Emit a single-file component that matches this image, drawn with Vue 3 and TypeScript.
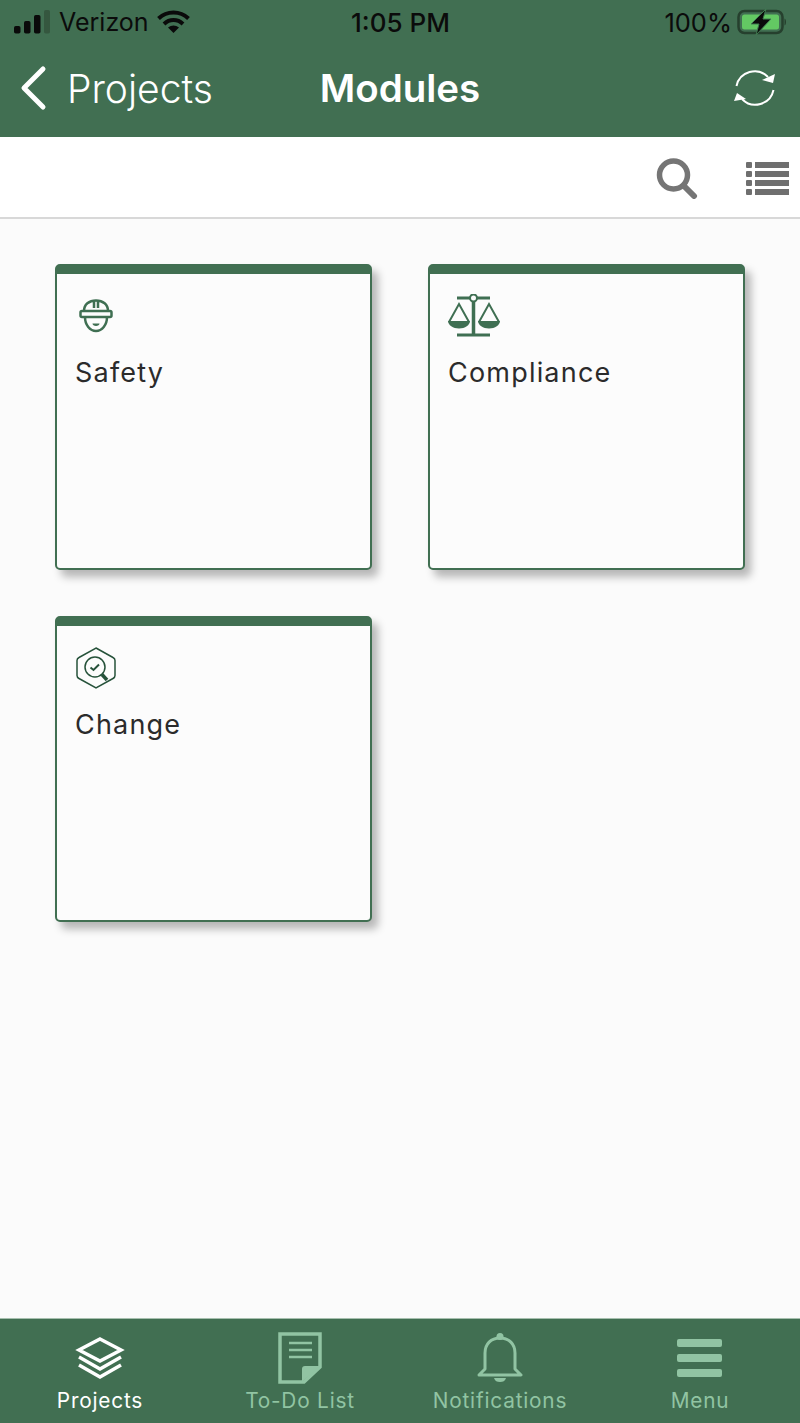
<script setup lang="ts">
const modules = [
  { name: 'Safety', icon: 'safety' },
  { name: 'Compliance', icon: 'scale' },
  { name: 'Change', icon: 'change' },
]
</script>

<template>
  <div class="page">
    <header class="top">
      <div class="status">
        <div class="status-left">
          <svg class="signal" width="36" height="24" viewBox="0 0 36 24">
            <rect x="0" y="16" width="6.500" height="7.500" rx="1.800" fill="#0a0a0a" />
            <rect x="10" y="11" width="6.500" height="12.500" rx="1.800" fill="#0a0a0a" />
            <rect x="20" y="5" width="6.500" height="18.500" rx="1.800" fill="#0a0a0a" />
            <rect x="30" y="0" width="6" height="23.500" rx="1.800" fill="#35573f" />
          </svg>
          <span class="carrier">Verizon</span>
          <svg class="wifi" width="33" height="24" viewBox="0 0 33 24">
            <path d="M1.500 8.500C10 .5 23 .5 31.500 8.500" fill="none" stroke="#0a0a0a" stroke-width="4" />
            <path d="M7 14C12.500 8.800 20.500 8.800 26 14" fill="none" stroke="#0a0a0a" stroke-width="4" />
            <path d="M11 17.500C14.500 14.800 18.500 14.800 22 17.500L16.500 23Z" fill="#0a0a0a" />
          </svg>
        </div>
        <span class="time">1:05 PM</span>
        <div class="status-right">
          <span class="pct">100%</span>
          <svg width="50" height="26" viewBox="0 0 50 26">
            <rect x="1.500" y="2" width="44" height="22" rx="6" fill="none" stroke="#26402e" stroke-width="2.500" />
            <rect x="5" y="5.500" width="37" height="15" rx="2.500" fill="#63c863" />
            <path d="M47.500 9.500c2 .5 2 6.500 0 7z" fill="#26402e" />
            <path d="M29 0L14 15h8l-3 11 15-16h-8z" fill="#0a0a0a" stroke="#3f7a50" stroke-width="1" />
          </svg>
        </div>
      </div>
      <nav class="nav">
        <div class="back">
          <svg width="30" height="46" viewBox="0 0 30 46">
            <path d="M25 4L6 23l19 19" fill="none" stroke="#fff" stroke-width="5" stroke-linecap="round" stroke-linejoin="round" />
          </svg>
          <span>Projects</span>
        </div>
        <h1 class="title">Modules</h1>
        <svg class="sync" width="44" height="44" viewBox="0 0 44 44">
          <path d="M5.500 20A18.500 18.500 0 0 1 37 11" fill="none" stroke="#fff" stroke-width="2" />
          <path d="M44 8l-2 9-11-3z" fill="#fff" />
          <path d="M42.500 24A18.500 18.500 0 0 1 11 33" fill="none" stroke="#fff" stroke-width="2" />
          <path d="M3 35l3-8 9 6z" fill="#fff" />
        </svg>
      </nav>
    </header>

    <div class="toolbar">
      <svg width="42" height="42" viewBox="0 0 42 42">
        <circle cx="17.500" cy="18" r="14" fill="none" stroke="#757575" stroke-width="5.500" />
        <path d="M28 29l10 10" stroke="#757575" stroke-width="6" stroke-linecap="round" />
      </svg>
      <svg class="list" width="44" height="36" viewBox="0 0 44 36">
        <g fill="#6f6f6f">
          <rect x="0" y="1" width="6" height="6" rx="1" />
          <rect x="9" y="1" width="34" height="6" />
          <rect x="0" y="10" width="6" height="6" rx="1" />
          <rect x="9" y="10" width="34" height="6" />
          <rect x="0" y="19" width="6" height="6" rx="1" />
          <rect x="9" y="19" width="34" height="6" />
          <rect x="0" y="28" width="6" height="6" rx="1" />
          <rect x="9" y="28" width="34" height="6" />
        </g>
      </svg>
    </div>

    <main class="content">
      <article v-for="m in modules" :key="m.name" class="card">
        <div class="icon-box">
          <svg v-if="m.icon === 'safety'" class="safety" width="34" height="34" viewBox="0 0 34 34">
            <g fill="none" stroke="#3f6f52" stroke-width="2.500">
              <path d="M5 12C5 5.500 10 1.500 17 1.500S29 5.500 29 12" />
              <rect x="1.500" y="12" width="31" height="6" rx="1.500" />
              <path d="M15 2v7M19 2v7" />
              <path d="M6 18c0 8 5 14 11 14s11-6 11-14" />
            </g>
            <path d="M13.500 24.500h7c0 1.500-1.500 2.500-3.500 2.500s-3.500-1-3.500-2.500z" fill="#3f6f52" />
          </svg>
          <svg v-else-if="m.icon === 'scale'" class="scale" width="54" height="44" viewBox="0 0 54 44">
            <g fill="none" stroke="#3f6f52" stroke-width="2">
              <path d="M10 4h33" stroke-width="3" />
              <path d="M26.500 7v34" stroke-width="3.500" />
              <path d="M10 41h33" stroke-width="3" />
              <circle cx="26.500" cy="4" r="3.500" fill="#fafafa" />
              <path d="M2 28L12 10l10 18" />
              <path d="M32 28L42 10l10 18" />
            </g>
            <path d="M1 27h22c0 4-5 7.500-11 7.500S1 31 1 27z" fill="#3f6f52" />
            <path d="M31 27h22c0 4-5 7.500-11 7.500S31 31 31 27z" fill="#3f6f52" />
          </svg>
          <svg v-else class="change" width="42" height="44" viewBox="0 0 42 44">
            <g fill="none" stroke="#26523a">
              <path d="M21 2l17 9.500c1 .5 2 1.500 2 3v15c0 1.500-1 2.500-2 3L21 42 4 32.500c-1-.5-2-1.500-2-3v-15c0-1.500 1-2.500 2-3z" stroke-width="1.500" />
              <circle cx="20" cy="21" r="10" stroke-width="1.500" />
              <path d="M15.500 21.500l3 2.500 5.500-5.500" stroke-width="2" />
              <path d="M27 28.500l5 5.500" stroke-width="3.500" />
            </g>
          </svg>
        </div>
        <div class="label">{{ m.name }}</div>
      </article>
    </main>

    <footer class="tabs">
      <div class="tab active">
        <svg class="layers" width="50" height="44" viewBox="0 0 50 44">
          <g fill="none" stroke="#fff" stroke-width="3.500">
            <path d="M25 3L46 14 25 25 4 14z" />
            <path d="M4 21l21 12 21-12" />
            <path d="M4 29l21 12 21-12" />
          </g>
        </svg>
        <span>Projects</span>
      </div>
      <div class="tab">
        <svg width="44" height="52" viewBox="0 0 44 52">
          <path d="M2 2h40v33L26 50H2z" fill="none" stroke="#91c4a3" stroke-width="3.500" />
          <path d="M11 11h23M11 18h23M11 25h23" stroke="#91c4a3" stroke-width="2.500" />
          <path d="M24 50V37c0-2 1-3 3-3h15z" fill="#91c4a3" />
        </svg>
        <span>To-Do List</span>
      </div>
      <div class="tab">
        <svg width="46" height="52" viewBox="0 0 46 52">
          <circle cx="23" cy="4.500" r="3.500" fill="#91c4a3" />
          <path d="M8 37V21C8 12 14 6 23 6s15 6 15 15v16l6 6H2z" fill="none" stroke="#91c4a3" stroke-width="3" stroke-linejoin="round" />
          <path d="M17 46h12c-1 3-3 4-6 4s-5-1-6-4z" fill="#91c4a3" />
        </svg>
        <span>Notifications</span>
      </div>
      <div class="tab">
        <svg width="46" height="40" viewBox="0 0 46 40" class="menu">
          <rect x="0" y="1" width="45" height="8" rx="2" fill="#91c4a3" />
          <rect x="0" y="16" width="45" height="8" rx="2" fill="#91c4a3" />
          <rect x="0" y="31" width="45" height="8" rx="2" fill="#91c4a3" />
        </svg>
        <span>Menu</span>
      </div>
    </footer>
  </div>
</template>

<style>
html, body { margin: 0; padding: 0; }
</style>

<style scoped>
.page {
  width: 800px;
  height: 1423px;
  display: flex;
  flex-direction: column;
  background: #fbfbfb;
  font-family: Inter, "Noto Sans", Arial, sans-serif;
  overflow: hidden;
}
.top {
  height: 137px;
  flex: none;
  background: #416f52;
  display: flex;
  flex-direction: column;
}
.status {
  height: 44px;
  padding: 0 13px 0 14px;
  display: grid;
  grid-template-columns: 1fr auto 1fr;
  align-items: center;
  color: #0b0b0b;
  font-size: 25px;
}
.status-left, .status-right {
  display: flex;
  align-items: center;
}
.status-right { justify-content: flex-end; gap: 5px; }
.pct { font-size: 25.500px; }
.carrier { margin-left: 9px; margin-right: 8px; }
.time { font-size: 26px; font-weight: 500; }
.nav {
  flex: 1;
  position: relative;
  display: flex;
  align-items: center;
  justify-content: space-between;
  padding: 0 25px 5px 18px;
  color: #fff;
}
.back {
  display: flex;
  align-items: center;
  gap: 19px;
  font-size: 39px;
  font-weight: 350;
}
.title {
  position: absolute;
  left: 0;
  right: 0;
  top: 21px;
  margin: 0;
  text-align: center;
  font-size: 38.500px;
  line-height: 46px;
  font-weight: 600;
}
.toolbar {
  height: 82px;
  flex: none;
  box-sizing: border-box;
  background: #fff;
  border-bottom: 2px solid #d8d8d8;
  display: flex;
  justify-content: flex-end;
  align-items: center;
  padding: 2px 10px 0 0;
  gap: 48px;
}
.list { margin-top: 2px; }
.content {
  flex: 1;
  display: grid;
  grid-template-columns: 317px 317px;
  grid-auto-rows: 306px;
  column-gap: 56px;
  row-gap: 46px;
  align-content: start;
  padding: 45px 0 0 55px;
}
.card {
  box-sizing: border-box;
  border: 2px solid #416f52;
  border-top-width: 10px;
  border-radius: 5px;
  background: #fcfcfc;
  box-shadow: 6px 7px 9px rgba(0, 0, 0, 0.28);
  padding: 0 18px;
}
.icon-box {
  height: 84px;
  display: flex;
  align-items: center;
}
.safety { margin-left: 4px; }
.scale { margin-left: -1px; }
.label {
  font-size: 27px;
  line-height: 30px;
  letter-spacing: 1.200px;
  color: #2b2b2b;
}
.tabs {
  height: 105px;
  flex: none;
  box-sizing: border-box;
  border-top: 1px solid #a6bfae;
  background: #416f52;
  display: grid;
  grid-template-columns: repeat(4, 200px);
}
.tab {
  display: flex;
  flex-direction: column;
  align-items: center;
  justify-content: flex-end;
  padding-bottom: 10px;
  color: #91c4a3;
  font-size: 20.800px;
  letter-spacing: 0.800px;
  gap: 4px;
}
.tab.active { color: #fff; }
.menu { margin-bottom: 6px; }
.layers { margin-bottom: 4px; }
</style>
